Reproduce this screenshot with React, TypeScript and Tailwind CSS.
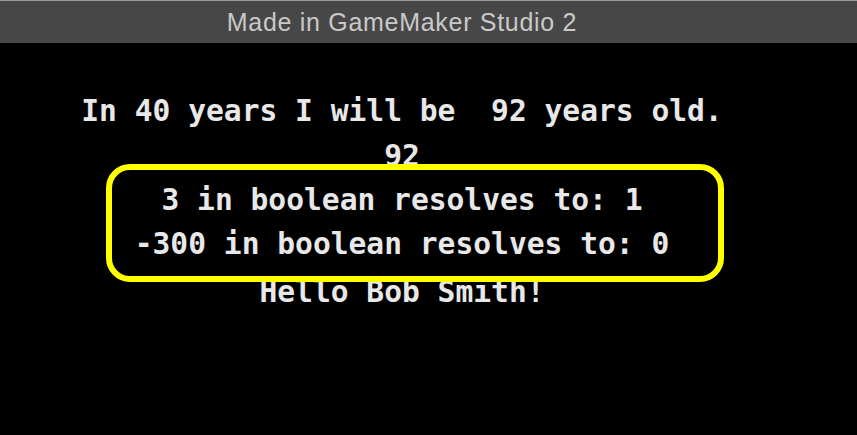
export default function App() {
  const lines = [
    'In 40 years I will be  92 years old.',
    '92',
    '3 in boolean resolves to: 1',
    '-300 in boolean resolves to: 0',
  ];

  return (
    <div className="relative h-[435px] w-[857px] overflow-hidden bg-black">
      <div className="h-[43px] border-t border-[#9a9a9a] bg-[#474747]">
        <div
          className="w-[804px] pt-[6px] text-center text-[25px] leading-[30px] tracking-[0.7px] text-[#c9c9c9]"
          style={{ fontFamily: '"Liberation Sans", Arial, sans-serif' }}
        >
          Made in GameMaker Studio 2
        </div>
      </div>

      <div
        className="w-[804px] pt-[46px] text-center text-[29.6px] font-bold leading-[44px] whitespace-pre text-[#e8e8e8]"
        style={{ fontFamily: '"DejaVu Sans Mono", "Liberation Mono", monospace' }}
      >
        {lines.map((line, i) => (
          <div key={i} className={i === 0 ? 'mb-[1px]' : ''}>
            {line}
          </div>
        ))}
        <div className="mt-[4px]">Hello Bob Smith!</div>
      </div>

      {/* annotation box drawn over the game output */}
      <div className="absolute left-[106px] top-[164px] h-[118px] w-[618px] rounded-[24px] border-[6px] border-[#ffff00]" />
    </div>
  );
}
